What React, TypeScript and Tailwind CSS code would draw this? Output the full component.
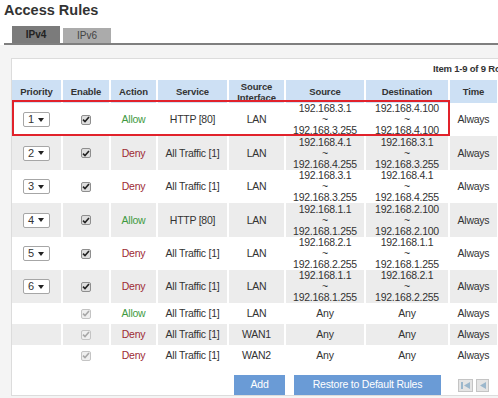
import React from "react";

type Rule = {
  priority?: number;
  action: "Allow" | "Deny";
  service: string;
  iface: string;
  source: string[];
  dest: string[];
  h: string;
};

const rules: Rule[] = [
  { priority: 1, action: "Allow", service: "HTTP [80]", iface: "LAN", source: ["192.168.3.1", "192.168.3.255"], dest: ["192.168.4.100", "192.168.4.100"], h: "h-[33px]" },
  { priority: 2, action: "Deny", service: "All Traffic [1]", iface: "LAN", source: ["192.168.4.1", "192.168.4.255"], dest: ["192.168.3.1", "192.168.3.255"], h: "h-[34px]" },
  { priority: 3, action: "Deny", service: "All Traffic [1]", iface: "LAN", source: ["192.168.3.1", "192.168.3.255"], dest: ["192.168.4.1", "192.168.4.255"], h: "h-[33px]" },
  { priority: 4, action: "Allow", service: "HTTP [80]", iface: "LAN", source: ["192.168.1.1", "192.168.1.255"], dest: ["192.168.2.100", "192.168.2.100"], h: "h-[34px]" },
  { priority: 5, action: "Deny", service: "All Traffic [1]", iface: "LAN", source: ["192.168.2.1", "192.168.2.255"], dest: ["192.168.1.1", "192.168.1.255"], h: "h-[33px]" },
  { priority: 6, action: "Deny", service: "All Traffic [1]", iface: "LAN", source: ["192.168.1.1", "192.168.1.255"], dest: ["192.168.2.1", "192.168.2.255"], h: "h-[33px]" },
  { action: "Allow", service: "All Traffic [1]", iface: "LAN", source: [], dest: [], h: "h-[21px]" },
  { action: "Deny", service: "All Traffic [1]", iface: "WAN1", source: [], dest: [], h: "h-[21px]" },
  { action: "Deny", service: "All Traffic [1]", iface: "WAN2", source: [], dest: [], h: "h-[21px]" },
];

const cols =
  "grid grid-cols-[51px_48px_47px_71px_57px_80px_84px_49px_80px]";

function Cell({ children }: { children?: React.ReactNode }) {
  return (
    <div className="flex flex-col items-center justify-center border-r-2 border-white text-center">
      {children}
    </div>
  );
}

function Range({ ips }: { ips: string[] }) {
  if (ips.length === 0) return <span>Any</span>;
  return (
    <div className="leading-[11px]">
      <div>{ips[0]}</div>
      <div>~</div>
      <div>{ips[1]}</div>
    </div>
  );
}

function Check({ disabled }: { disabled?: boolean }) {
  return (
    <span
      className={`flex h-[10px] w-[10px] items-center justify-center rounded-[2px] border ${
        disabled ? "border-[#c4c4c4] bg-[#efefef]" : "border-[#8e8e8e] bg-[#dedede]"
      }`}
    >
      <svg width="8" height="7" viewBox="0 0 8 7">
        <path
          d="M1 3.6 L3 5.6 L7 1"
          fill="none"
          stroke={disabled ? "#a8a8a8" : "#222"}
          strokeWidth="1.6"
        />
      </svg>
    </span>
  );
}

function PrioritySelect({ value }: { value: number }) {
  return (
    <div className="flex h-[15px] w-[27px] items-center justify-between rounded-[2px] border border-[#a6a6a6] bg-white pl-[4px] pr-[5px] text-[11px] leading-none">
      <span>{value}</span>
      <svg width="6" height="4" viewBox="0 0 6 4">
        <polygon points="0,0 6,0 3,4" fill="#222" />
      </svg>
    </div>
  );
}

export default function App() {
  return (
    <div className="h-[398px] w-[498px] overflow-hidden bg-white font-['Liberation_Sans',Arial,sans-serif] text-[#333]">
      <h1 className="h-[26px] pl-[4px] pt-[1px] text-[14.5px] font-bold leading-[18px] text-[#333]">
        Access Rules
      </h1>

      {/* tabs */}
      <div className="ml-[4px] flex h-[19px] items-end gap-[3px] border-b-2 border-[#7f7f7f] pl-[8px]">
        <div className="flex h-[17px] w-[48px] items-center justify-center bg-[#7b7b7b] text-[10px] font-bold text-[#222]">
          IPv4
        </div>
        <div className="flex h-[15px] w-[48px] items-center justify-center bg-[#ababab] text-[10px] text-[#444]">
          IPv6
        </div>
      </div>

      <div className="h-[353px] bg-[#f4f4f4] pt-[13px]">
        <div className="ml-[11px] h-[338px] w-[620px] border border-[#dcdcdc] bg-white">
          <div className="flex h-[21px] items-center whitespace-nowrap pl-[421px] text-[9.5px] font-bold tracking-[-0.2px] text-[#333]">
            Item 1-9 of 9 Rows per page
          </div>

          <div className="relative">
            <div className={`${cols} h-[23px] bg-[#cde0f4] text-[9.5px] font-bold leading-[11px] tracking-[-0.1px] text-[#333]`}>
              <Cell>Priority</Cell>
              <Cell>Enable</Cell>
              <Cell>Action</Cell>
              <Cell>Service</Cell>
              <Cell>
                <span>Source</span>
                <span>Interface</span>
              </Cell>
              <Cell>Source</Cell>
              <Cell>Destination</Cell>
              <Cell>Time</Cell>
              <Cell />
            </div>

            {rules.map((r, i) => (
              <div
                key={i}
                className={`${cols} ${r.h} ${
                  i % 2 === 1 ? "bg-[#ececec]" : "bg-white"
                } text-[10.5px] leading-[13px] tracking-[-0.25px] text-[#333]`}
              >
                <Cell>{r.priority ? <PrioritySelect value={r.priority} /> : null}</Cell>
                <Cell>
                  <Check disabled={!r.priority} />
                </Cell>
                <Cell>
                  <span className={r.action === "Allow" ? "text-[#3f9a3f]" : "text-[#9c2a33]"}>
                    {r.action}
                  </span>
                </Cell>
                <Cell>{r.service}</Cell>
                <Cell>{r.iface}</Cell>
                <Cell>
                  <Range ips={r.source} />
                </Cell>
                <Cell>
                  <Range ips={r.dest} />
                </Cell>
                <Cell>Always</Cell>
                <Cell />
              </div>
            ))}

            {/* highlight around the first rule */}
            <div className="absolute left-0 top-[20px] h-[36px] w-[438px] border-2 border-[#e1222b]" />
          </div>

          <div className="mt-[9px] flex h-[20px] items-center pl-[222px] text-[10.5px] tracking-[-0.2px] text-white">
            <button className="flex h-[20px] w-[51px] items-center justify-center bg-[#6a9bd6]">
              Add
            </button>
            <button className="ml-[9px] flex h-[20px] w-[147px] items-center justify-center bg-[#6a9bd6]">
              Restore to Default Rules
            </button>
            <button className="ml-[17px] flex h-[13px] w-[15px] items-center justify-center border border-[#c4c4c4] bg-[#e4e4e4]">
              <svg width="9" height="7" viewBox="0 0 9 7">
                <rect x="0" y="0" width="2" height="7" fill="#9bb7cc" />
                <polygon points="9,0 9,7 3,3.5" fill="#9bb7cc" />
              </svg>
            </button>
            <button className="ml-[3px] flex h-[13px] w-[13px] items-center justify-center border border-[#c4c4c4] bg-[#e4e4e4]">
              <svg width="6" height="7" viewBox="0 0 6 7">
                <polygon points="6,0 6,7 0,3.5" fill="#9bb7cc" />
              </svg>
            </button>
          </div>
        </div>
      </div>
    </div>
  );
}
